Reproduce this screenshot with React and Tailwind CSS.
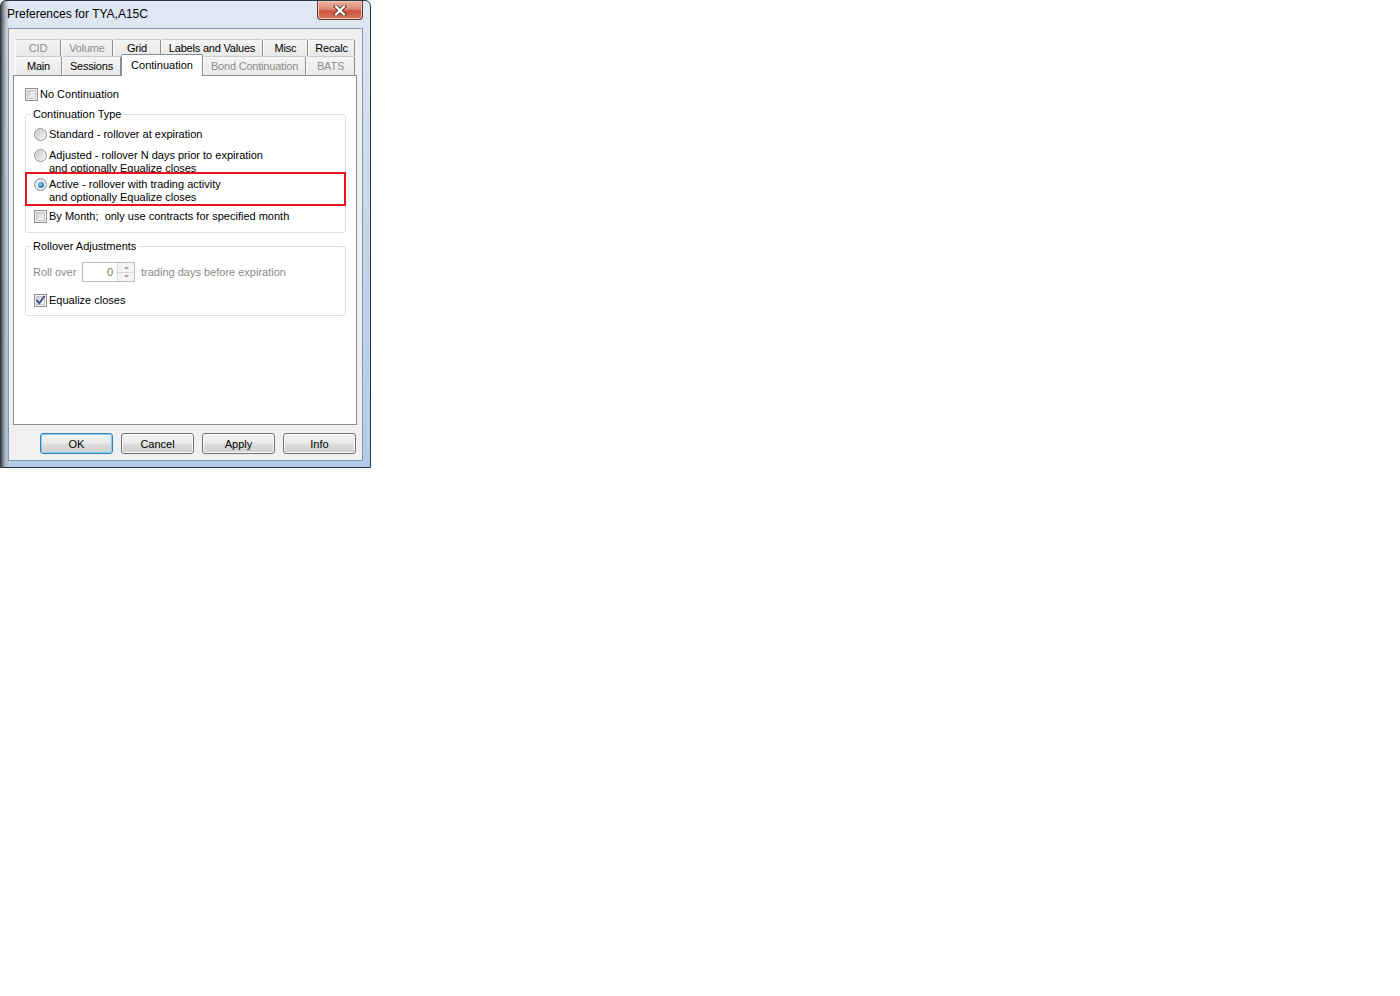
import React from "react";

// tab strip rows (multi-row Win32 tab control, selected row sits at the bottom)
const topRow = [
  { label: "CID", w: "w-[46px]", disabled: true },
  { label: "Volume", w: "w-[52px]", disabled: true },
  { label: "Grid", w: "w-[48px]" },
  { label: "Labels and Values", w: "w-[102px]" },
  { label: "Misc", w: "w-[45px]" },
  { label: "Recalc", w: "w-[47px]" },
];

const bottomRow = [
  { label: "Main", w: "w-[47px]" },
  { label: "Sessions", w: "w-[59px]" },
  { label: "Continuation", w: "w-[82px]", selected: true },
  { label: "Bond Continuation", w: "w-[103px]", disabled: true },
  { label: "BATS", w: "w-[49px]", disabled: true },
];

function Tab({ label, w, disabled, selected }) {
  if (selected) {
    return (
      <div
        className={`${w} relative z-10 -mb-px flex h-[22px] items-center justify-center rounded-t-[2px] border border-b-0 border-[#898c95] bg-white text-black`}
      >
        {label}
      </div>
    );
  }
  return (
    <div
      className={`${w} flex h-full items-center justify-center rounded-t-[2px] border border-b-0 border-t-[#c9cbd0] border-l-[#fafafa] border-r-[#8c8e94] bg-[linear-gradient(#f4f4f4,#e9e9e9)] tracking-[-0.2px] ${
        disabled ? "text-[#8d8d8d]" : "text-black"
      }`}
    >
      {label}
    </div>
  );
}

function Radio({ checked }) {
  return (
    <span className="flex h-[13px] w-[13px] shrink-0 items-center justify-center rounded-full border border-[#8e8f8f] bg-[linear-gradient(135deg,#d6d6d6,#f8f8f8)]">
      {checked ? (
        <span className="flex h-[9px] w-[9px] items-center justify-center rounded-full bg-[#e9eef2]">
          <span className="h-[6px] w-[6px] rounded-full bg-[radial-gradient(circle_at_40%_40%,#8fd4fb,#1f6fb0_70%,#14406b)]" />
        </span>
      ) : (
        <span className="h-[9px] w-[9px] rounded-full bg-[linear-gradient(135deg,#c9c9c9,#f3f3f3)]" />
      )}
    </span>
  );
}

function Checkbox({ checked }) {
  return (
    <span className="relative flex h-[13px] w-[13px] shrink-0 items-center justify-center border border-[#8e8f8f] bg-[#f4f4f4]">
      <span className="h-[9px] w-[9px] border border-[#c2c5ca] bg-[linear-gradient(135deg,#cfd2d6,#f7f7f7)]" />
      {checked && (
        <svg
          viewBox="0 0 11 11"
          className="absolute left-0 top-0 h-[11px] w-[11px]"
          fill="none"
        >
          <path
            d="M2 5.5 L4.3 8.2 L9 1.8"
            stroke="#3b4f87"
            strokeWidth="1.8"
            strokeLinecap="square"
          />
        </svg>
      )}
    </span>
  );
}

function Button({ children, focused }) {
  return (
    <button
      className={`h-[21px] w-[73px] rounded-[3px] border bg-[linear-gradient(#f2f2f2,#ebebeb_48%,#dddddd_52%,#cfcfcf)] pt-[1px] text-[11px] leading-[13px] text-black ${
        focused
          ? "border-[#3c7fb1] shadow-[inset_0_0_0_1px_#7fd3f7]"
          : "border-[#707070] shadow-[inset_0_0_0_1px_#fbfbfb]"
      }`}
    >
      {children}
    </button>
  );
}

function CloseButton() {
  return (
    <div className="flex h-[19px] w-[46px] items-center justify-center rounded-b-[4px] border border-t-0 border-[#6a3a30] bg-[linear-gradient(#eab2a2,#dc8a73_45%,#c9533a_55%,#d77a60)] shadow-[inset_0_0_0_1px_#f2c2b4]">
      <svg viewBox="0 0 14 11" className="h-[11px] w-[14px]">
        <path
          d="M3 1.5 L11 9.5 M11 1.5 L3 9.5"
          stroke="#5a3a34"
          strokeWidth="4"
          strokeLinecap="square"
        />
        <path
          d="M3 1.5 L11 9.5 M11 1.5 L3 9.5"
          stroke="#ffffff"
          strokeWidth="2.2"
          strokeLinecap="square"
        />
      </svg>
    </div>
  );
}

function Spinner() {
  return (
    <div className="flex h-[20px] w-[53px] border border-[#b8bcc2] bg-white">
      <div className="flex flex-1 items-center justify-end pr-[4px] text-[#6d6d6d]">0</div>
      <div className="flex w-[17px] flex-col border-l border-[#d4d6d9]">
        <div className="flex flex-1 items-center justify-center border-b border-[#d4d6d9] bg-[#f4f4f4]">
          <svg viewBox="0 0 5 3" className="h-[3px] w-[5px]">
            <path d="M0 3 L2.5 0 L5 3 Z" fill="#a6a6a6" />
          </svg>
        </div>
        <div className="flex flex-1 items-center justify-center bg-[#f4f4f4]">
          <svg viewBox="0 0 5 3" className="h-[3px] w-[5px]">
            <path d="M0 0 L2.5 3 L5 0 Z" fill="#a6a6a6" />
          </svg>
        </div>
      </div>
    </div>
  );
}

export default function App() {
  return (
    <div className="min-h-screen bg-white font-['Liberation_Sans',Arial,sans-serif] text-[11px] leading-[13px]">
      {/* window frame */}
      <div className="flex h-[468px] w-[371px] flex-col rounded-t-[6px] border border-[#2c3742] bg-[linear-gradient(90deg,#4a4f55_0px,#a9b4bf_4px,transparent_8px),linear-gradient(#dfe9f4,#c8d9eb_40%,#b2cbe5)]">
        {/* title bar */}
        <div className="flex h-[27px] items-start justify-between">
          <div className="pl-[6px] pt-[6px] text-[12px] leading-[14px] text-black">
            Preferences for TYA,A15C
          </div>
          <div className="mr-[7px]">
            <CloseButton />
          </div>
        </div>

        {/* client area */}
        <div className="mx-[7px] flex h-[433px] flex-col border border-[#8797ab] bg-[#f0f0f0]">
          <div className="ml-[4px] mt-[10px] flex flex-col">
            {/* tabs */}
            <div className="ml-[2px] flex h-[17px] w-[340px]">
              {topRow.map((t) => (
                <Tab key={t.label} {...t} />
              ))}
            </div>
            <div className="ml-[2px] flex h-[19px] w-[340px] items-end">
              {bottomRow.map((t) => (
                <Tab key={t.label} {...t} />
              ))}
            </div>

            {/* tab page */}
            <div className="flex h-[350px] w-[344px] flex-col border border-[#898c95] bg-white pl-[11px]">
              <div className="mt-[12px] flex items-center gap-[2px]">
                <Checkbox />
                <span>No Continuation</span>
              </div>

              <fieldset className="mt-[7px] w-[321px] rounded-[3px] border border-[#d5dfe5] pb-[9px]">
                <legend className="ml-[5px] px-[2px]">Continuation Type</legend>
                <div className="mt-[7px] flex items-center gap-[2px] pl-[8px]">
                  <Radio />
                  <span>Standard - rollover at expiration</span>
                </div>
                <div className="mt-[8px] flex items-start gap-[2px] pl-[8px]">
                  <Radio />
                  <span>
                    Adjusted - rollover N days prior to expiration
                    <br />
                    and optionally Equalize closes
                  </span>
                </div>
                <div className="relative -mx-px -mt-[3px] flex items-start gap-[2px] border-2 border-[#e8141c] pl-[7px] pt-[4px]">
                  <Radio checked />
                  <span>
                    Active - rollover with trading activity
                    <br />
                    and optionally Equalize closes
                  </span>
                </div>
                <div className="mt-[4px] flex items-center gap-[2px] pl-[8px]">
                  <Checkbox />
                  <span>By Month;&nbsp; only use contracts for specified month</span>
                </div>
              </fieldset>

              <fieldset className="mt-[7px] w-[321px] rounded-[3px] border border-[#d5dfe5] pb-[8px]">
                <legend className="ml-[5px] px-[2px]">Rollover Adjustments</legend>
                <div className="mt-[9px] flex items-center pl-[7px] text-[#8a8a8a]">
                  <span className="w-[49px]">Roll over</span>
                  <Spinner />
                  <span className="ml-[6px]">trading days before expiration</span>
                </div>
                <div className="mt-[12px] flex items-center gap-[2px] pl-[8px]">
                  <Checkbox checked />
                  <span>Equalize closes</span>
                </div>
              </fieldset>
            </div>
          </div>

          {/* dialog buttons */}
          <div className="ml-[31px] mt-[8px] flex gap-[8px]">
            <Button focused>OK</Button>
            <Button>Cancel</Button>
            <Button>Apply</Button>
            <Button>Info</Button>
          </div>
        </div>
      </div>
    </div>
  );
}
